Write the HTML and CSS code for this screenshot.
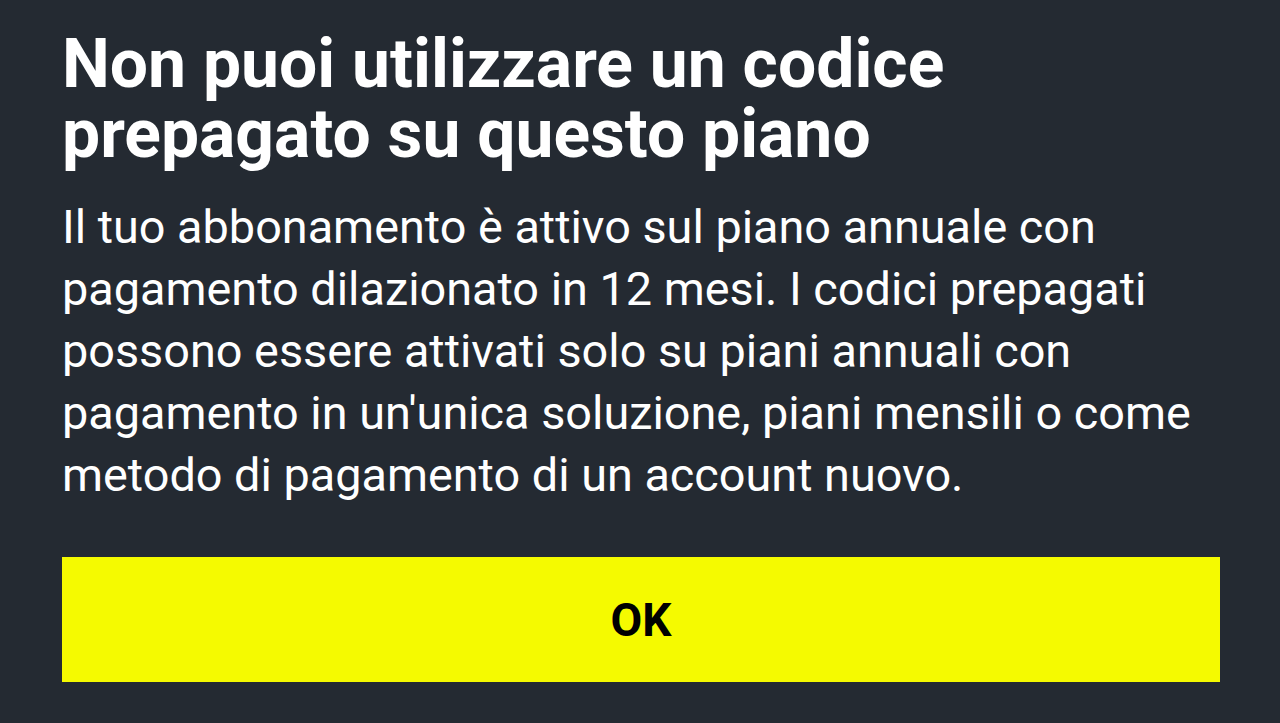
FILE: index.html
```html
<!DOCTYPE html>
<html lang="it">
<head>
    <meta charset="UTF-8">
    <meta name="viewport" content="width=device-width, initial-scale=1.0">
    <title>Codice prepagato</title>
    <link rel="stylesheet" href="styles.css">
</head>
<body>
    <div class="dialog">
        <h1 class="title">
            Non puoi utilizzare un codice prepagato su questo piano
        </h1>
        <p class="message">
            Il tuo abbonamento è attivo sul piano annuale con pagamento dilazionato in 12 mesi. I codici prepagati possono essere attivati solo su piani annuali con pagamento in un'unica soluzione, piani mensili o come metodo di pagamento di un account nuovo.
        </p>
        <button class="ok-button">OK</button>
    </div>
</body>
</html>
```

FILE: styles.css
```css
body{
    margin: 0;
    background-color: #242a32;
    color: white;
    font-family: Roboto, Arial, Helvetica, sans-serif;
}
.dialog{
    padding: 29px 60px 0 62px;
}
.title{
    margin: 0;
    font-size: 67.8px;
    line-height: 70px;
    font-weight: bold;
    width: 900px;
}
.message{
    margin: 27px 0 0 0;
    font-size: 46.8px;
    line-height: 62px;
}
.ok-button{
    display: block;
    width: 100%;
    height: 125px;
    margin-top: 51px;
    background-color: #f5fa00;
    border: none;
    border-radius: 0;
    color: black;
    font-family: Roboto, Arial, Helvetica, sans-serif;
    font-size: 46px;
    font-weight: bold;
    cursor: pointer;
}
```
